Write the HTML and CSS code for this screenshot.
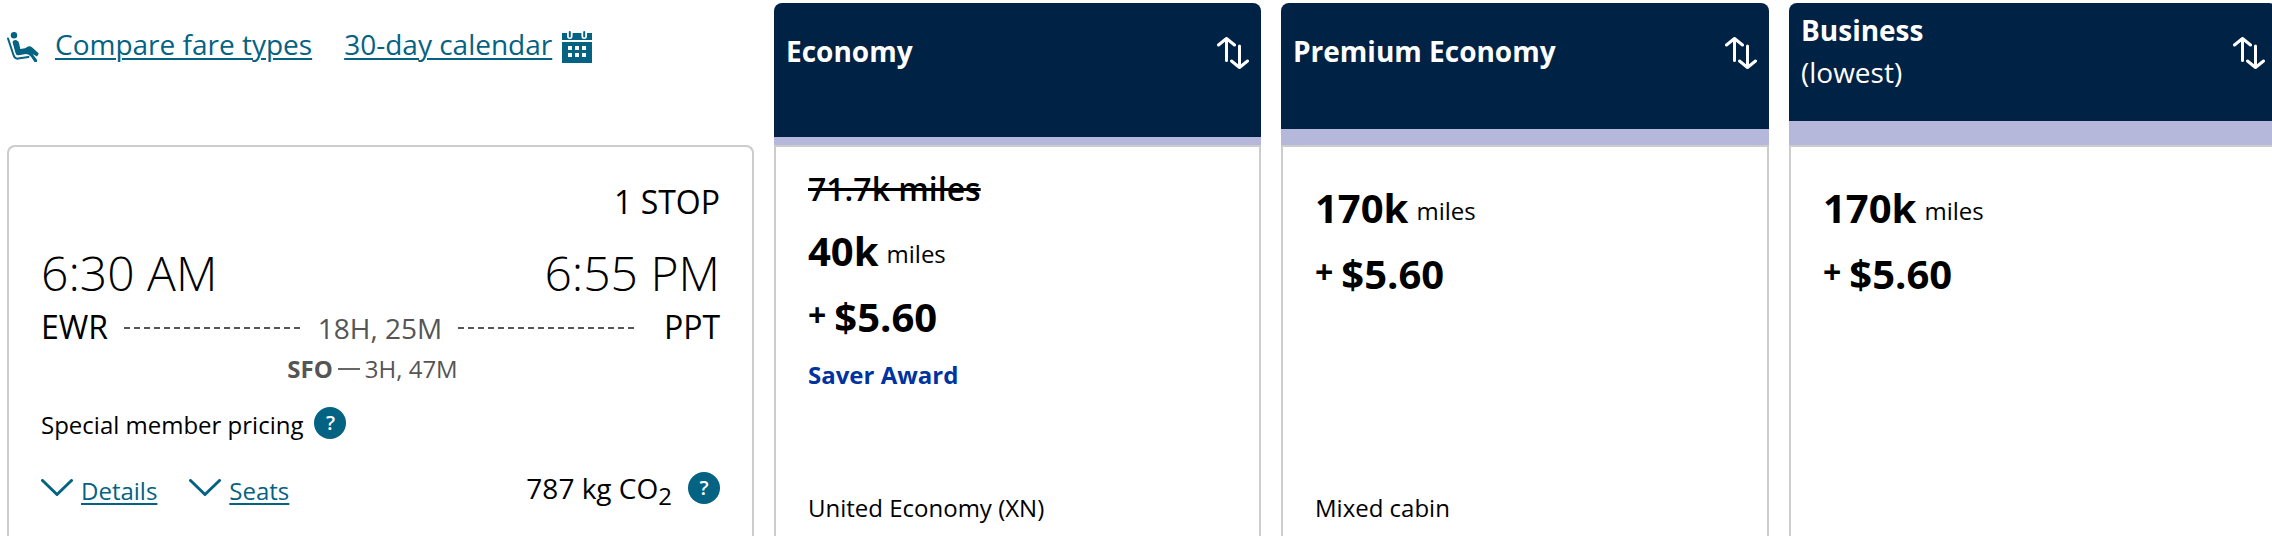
FILE: index.html
```html
<!DOCTYPE html>
<html lang="en">
<head>
<meta charset="utf-8">
<meta name="viewport" content="width=device-width, initial-scale=1">
<title>Flight results</title>
<link rel="stylesheet" href="styles.css">
</head>
<body>
<main class="results">
  <section class="trip">
    <nav class="tools" aria-label="Fare tools">
      <a class="tool tool-compare" href="#fares">
        <svg class="seat-icon" viewBox="0 0 32 30" aria-hidden="true"><circle cx="7" cy="3.2" r="3.2"/><path d="M5.500 10Q6.500 7.500 9.500 8.200Q12 9 12.200 12L13.300 17L18 16.300L21 14.500Q23 13.800 25 15.300L31.800 21.500L30 24.500L25.500 22L30.200 28L29.800 30H27.500L24 24.800Q22 22 19 22L11.500 23.200Q9 23.400 8.300 20.500Z"/><path class="line" d="M1 6.500L6.500 23Q7.800 27 11 26.600L21.500 25"/></svg>
        <span class="link-text">Compare fare types</span>
      </a>
      <a class="tool" href="#calendar">
        <span class="link-text">30-day calendar</span>
        <svg class="calendar-icon" viewBox="0 0 30 32" aria-hidden="true"><path fill-rule="evenodd" d="M0 2h5v3q0 3 2.800 3t2.800-3V2h8.800v3q0 3 2.800 3T25 5V2h5v7H0zM0 11h30v21H0zM6 15v4h4v-4zm7 0v4h4v-4zm7 0v4h4v-4zM6 22v4h4v-4zm7 0v4h4v-4zm7 0v4h4v-4z"/><path class="line" d="M7.800 1v4.500M22.200 1v4.500"/></svg>
      </a>
    </nav>
    <article class="trip-card">
      <p class="stops">1 STOP</p>
      <div class="times"><time datetime="06:30">6:30 AM</time><time datetime="18:55">6:55 PM</time></div>
      <div class="route">
        <span class="airport">EWR</span><span class="dashes"></span>
        <span class="duration">18H, 25M</span><span class="dashes"></span>
        <span class="airport airport-to">PPT</span>
      </div>
      <p class="layover"><strong>SFO</strong><span class="layover-dash"></span>3H, 47M</p>
      <div class="pricing"><span class="label">Special member pricing</span>
        <button class="help" type="button" aria-label="About special member pricing">?</button></div>
      <div class="actions">
        <a class="expand" href="#details"><svg class="chevron" viewBox="0 0 32 18" aria-hidden="true"><path d="M1.500 1.500L16 15.500L30.500 1.500"/></svg><span class="label link-text">Details</span></a>
        <a class="expand" href="#seats"><svg class="chevron" viewBox="0 0 32 18" aria-hidden="true"><path d="M1.500 1.500L16 15.500L30.500 1.500"/></svg><span class="label link-text">Seats</span></a>
        <span class="emissions">787 kg CO<sub>2</sub></span>
        <button class="help" type="button" aria-label="About carbon emissions">?</button>
      </div>
    </article>
  </section>

  <section class="fare">
    <header class="fare-head stripe-1">
      <h2>Economy</h2>
      <button class="sort" type="button" aria-label="Sort by Economy"><svg viewBox="0 0 32 32" aria-hidden="true"><path d="M9.500 23.500V1.500M1.500 8L9.500 1.500L17.500 8M22.500 9V30.500M14.500 24L22.500 30.500L30.500 24"/></svg></button>
    </header>
    <div class="fare-body discounted">
      <s class="was">71.7k miles</s>
      <p class="miles"><strong>40k</strong><span>miles</span></p>
      <p class="tax"><span>+</span><strong>$5.60</strong></p>
      <p class="saver">Saver Award</p>
      <p class="cabin">United Economy (XN)</p>
    </div>
  </section>

  <section class="fare">
    <header class="fare-head stripe-2">
      <h2>Premium Economy</h2>
      <button class="sort" type="button" aria-label="Sort by Premium Economy"><svg viewBox="0 0 32 32" aria-hidden="true"><path d="M9.500 23.500V1.500M1.500 8L9.500 1.500L17.500 8M22.500 9V30.500M14.500 24L22.500 30.500L30.500 24"/></svg></button>
    </header>
    <div class="fare-body">
      <p class="miles"><strong>170k</strong><span>miles</span></p>
      <p class="tax"><span>+</span><strong>$5.60</strong></p>
      <p class="cabin">Mixed cabin</p>
    </div>
  </section>

  <section class="fare">
    <header class="fare-head stripe-3">
      <h2>Business <small>(lowest)</small></h2>
      <button class="sort" type="button" aria-label="Sort by Business"><svg viewBox="0 0 32 32" aria-hidden="true"><path d="M9.500 23.500V1.500M1.500 8L9.500 1.500L17.500 8M22.500 9V30.500M14.500 24L22.500 30.500L30.500 24"/></svg></button>
    </header>
    <div class="fare-body">
      <p class="miles"><strong>170k</strong><span>miles</span></p>
      <p class="tax"><span>+</span><strong>$5.60</strong></p>
    </div>
  </section>
</main>
</body>
</html>
```
FILE: styles.css
```css
* { box-sizing: border-box; }
body { margin: 0; background: #fff; color: #000; font: 24px/32px "Open Sans", "Noto Sans", sans-serif; overflow: hidden; }
p, h2 { margin: 0; }
button { padding: 0; border: 0; font: inherit; cursor: pointer; }
a { color: #046282; text-decoration: none; }
.link-text { text-decoration: underline; text-decoration-thickness: 2px; text-underline-offset: 3px; }

.results {
  display: grid;
  grid-template-columns: 747fr 487fr 488fr 488fr;
  gap: 20px;
  min-height: 100vh;
  padding-left: 7px;
  margin-right: -5px;
}
.trip, .fare { display: flex; flex-direction: column; min-width: 0; }

.tools { display: flex; gap: 32px; height: 145px; padding-top: 24px; font-size: 28px; line-height: 40px; }
.tool { display: flex; align-items: flex-start; gap: 10px; }
.tool-compare { gap: 16px; }
.tool svg { fill: #046282; overflow: visible; }
.seat-icon { width: 32px; height: 30px; margin-top: 8px; }
.calendar-icon { width: 30px; height: 32px; margin-top: 7px; }
.tool .line { fill: none; stroke: #046282; stroke-width: 2; stroke-linecap: round; }

.trip-card { flex: 1; padding: 35px 32px 0; border: 2px solid #ccc; border-bottom: 0; border-radius: 8px 8px 0 0; }
.stops { font-size: 32px; line-height: 40px; text-align: right; }
.times { display: flex; justify-content: space-between; margin-top: 19px; font-size: 48px; line-height: 64px; font-weight: 300; }
.route { display: flex; align-items: center; gap: 16px; line-height: 46px; }
.airport { padding-bottom: 2px; font-size: 32px; line-height: 40px; }
.airport-to { margin-left: 12px; }
.duration { font-size: 28px; color: #555; }
.dashes {
  flex: 1; height: 2px;
  background: repeating-linear-gradient(90deg, #555 0 6px, transparent 6px 10px);
}
.layover { display: flex; align-items: center; justify-content: center; gap: 5px; padding-right: 16px; color: #555; line-height: 36px; }
.layover-dash { width: 22px; height: 2px; background: #666; }
.pricing { display: flex; align-items: center; gap: 11px; margin-top: 20px; }
.label { padding-top: 4px; line-height: 28px; }
.help {
  width: 32px; height: 32px; flex: none;
  border-radius: 50%; background: #046282; color: #fff;
  font-size: 20px; line-height: 32px; font-weight: 600;
}
.actions { display: flex; align-items: center; margin-top: 31px; line-height: 36px; }
.expand { display: flex; align-items: center; gap: 8px; margin-right: 32px; }
.expand .label { padding-top: 6px; }
.chevron { width: 32px; height: 18px; fill: none; stroke: #046282; stroke-width: 3; stroke-linecap: round; stroke-linejoin: round; }
.emissions { margin-left: auto; margin-right: 16px; font-size: 28px; }
.emissions sub { font-size: 24px; line-height: 0; vertical-align: -6px; }

.fare { padding-top: 3px; }
.fare-head {
  display: flex; justify-content: space-between; align-items: flex-start;
  height: 142px; padding: 34px 12px 0;
  border-bottom: 8px solid #b5b7db; border-radius: 8px 8px 0 0;
  background: #002244; color: #fff;
}
.stripe-2 { border-bottom-width: 16px; }
.stripe-3 { border-bottom-width: 24px; padding-top: 6px; }
.fare-head h2 { font-size: 28px; line-height: 28px; font-weight: 700; }
.stripe-3 h2 { line-height: 42px; }
.fare-head small { display: block; font-size: 28px; font-weight: 400; }
.sort { width: 32px; height: 32px; background: none; }
.stripe-3 .sort { margin-top: 28px; }
.sort svg { display: block; width: 32px; height: 32px; fill: none; stroke: #fff; stroke-width: 3; stroke-linecap: round; stroke-linejoin: round; }

.fare-body { display: flex; flex: 1; flex-direction: column; padding: 28px 32px 12px; border: 2px solid #ccc; border-bottom: 0; }
.discounted { padding-top: 22px; }
.was { margin-bottom: 9px; font-size: 32px; line-height: 40px; font-weight: 600; text-decoration-thickness: 3px; }
.miles, .tax { display: flex; align-items: center; gap: 8px; line-height: 66px; }
.miles strong, .tax strong { font-size: 40px; font-weight: 700; }
.miles span { padding-top: 6px; line-height: 60px; }
.tax span { padding-bottom: 4px; font-size: 32px; line-height: 62px; font-weight: 700; }
.saver { color: #0033a0; font-weight: 700; line-height: 50px; }
.cabin { margin-top: auto; }
```
